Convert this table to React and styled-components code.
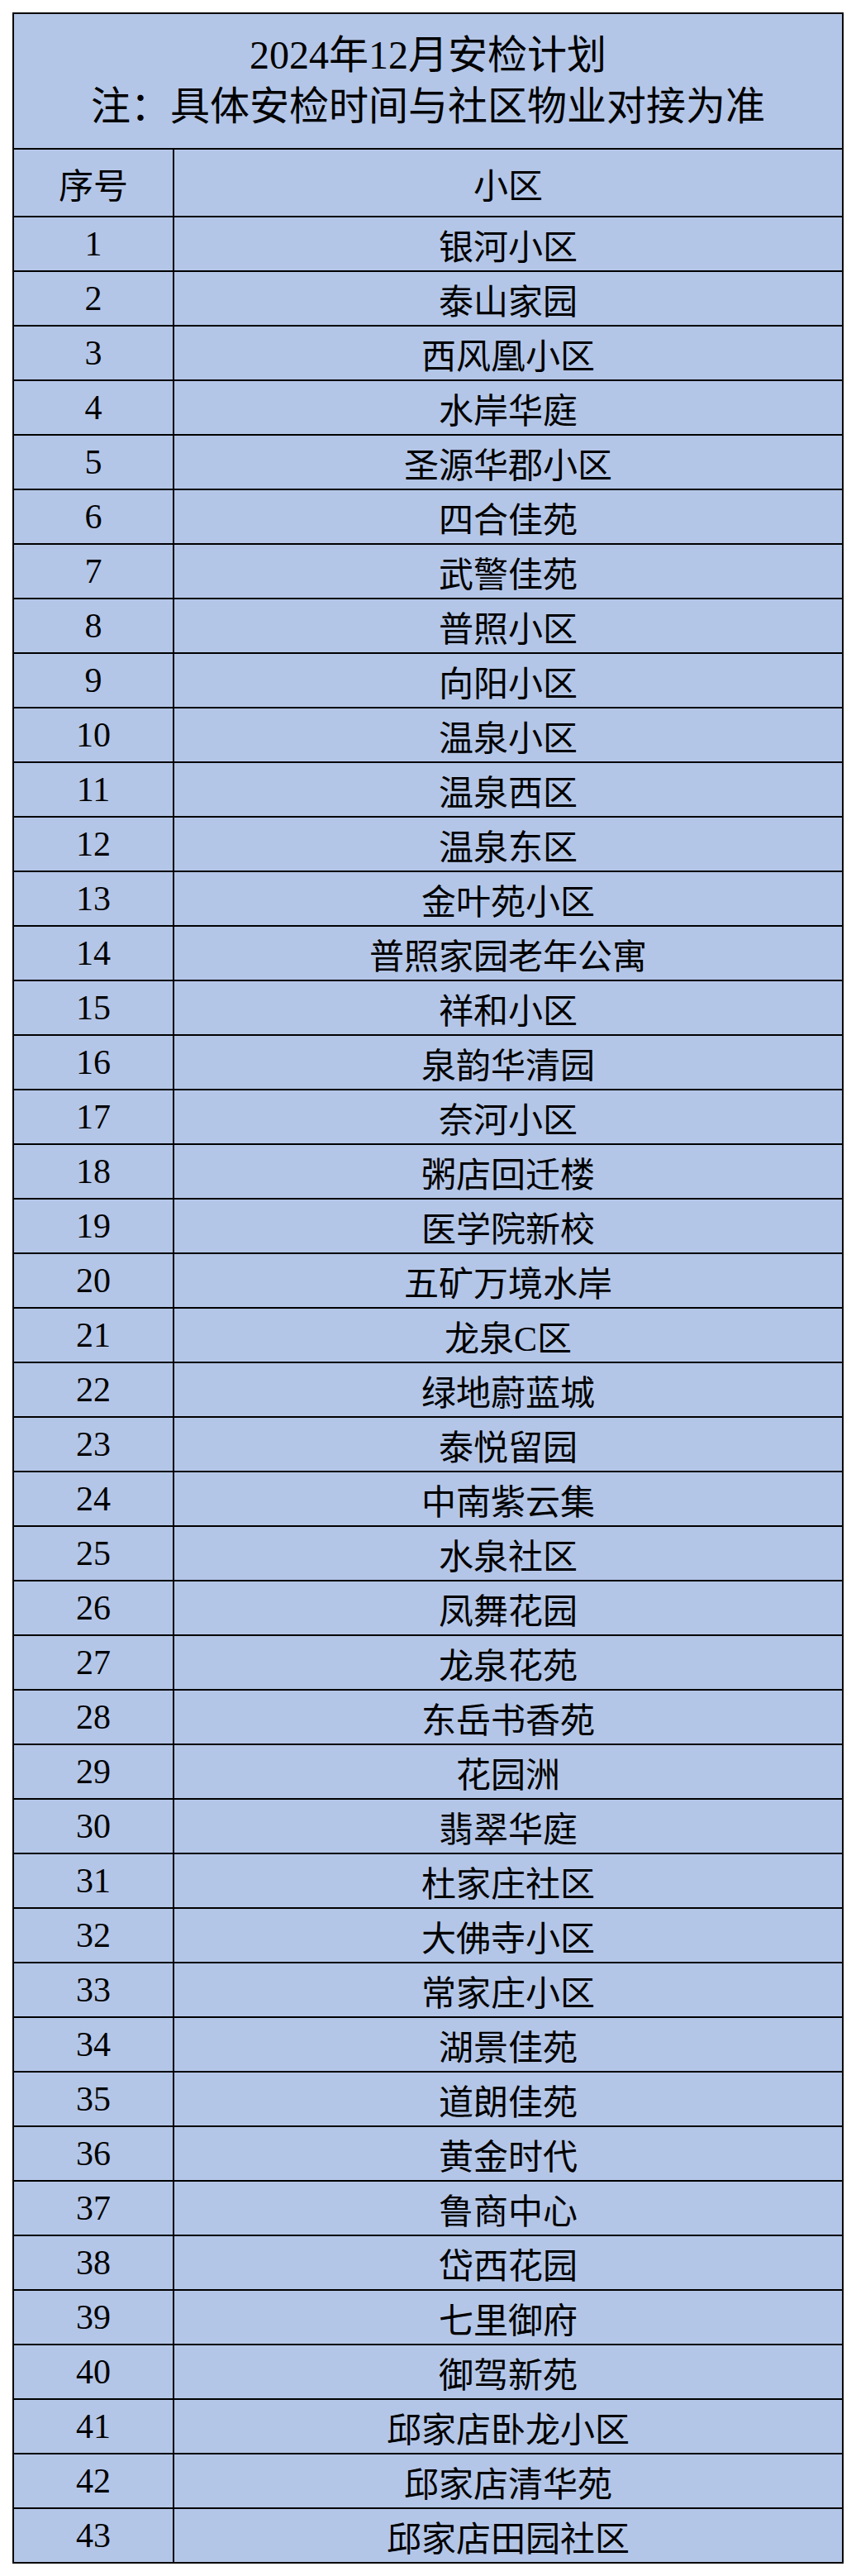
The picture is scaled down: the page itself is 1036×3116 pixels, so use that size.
import styled, { createGlobalStyle } from "styled-components";

const GlobalStyle = createGlobalStyle`
  body {
    margin: 0;
    background: #ffffff;
    font-family: "Liberation Serif", "Noto Sans CJK SC", serif;
    color: #000;
  }
`;

const Page = styled.div`
  padding: 15px 0 15px 15px;
`;

const Sheet = styled.div`
  width: 1002px;
  border: 2px solid #000;
  background: #b4c6e7;
`;

const TitleBlock = styled.div`
  height: 162px;
  display: flex;
  flex-direction: column;
  align-items: center;
  justify-content: center;
  font-size: 48px;
  line-height: 62px;
`;

const Row = styled.div`
  display: flex;
  height: ${(p) => (p.$head ? 80 : 64)}px;
  border-top: 2px solid #000;
`;

const Cell = styled.div`
  display: flex;
  align-items: center;
  justify-content: center;
  font-size: 42px;
  ${(p) =>
    p.$num
      ? `width: 192px; border-right: 2px solid #000;`
      : `flex: 1;`}
`;

const estates = [
  "银河小区", "泰山家园", "西风凰小区", "水岸华庭", "圣源华郡小区", "四合佳苑",
  "武警佳苑", "普照小区", "向阳小区", "温泉小区", "温泉西区", "温泉东区",
  "金叶苑小区", "普照家园老年公寓", "祥和小区", "泉韵华清园", "奈河小区",
  "粥店回迁楼", "医学院新校", "五矿万境水岸", "龙泉C区", "绿地蔚蓝城",
  "泰悦留园", "中南紫云集", "水泉社区", "凤舞花园", "龙泉花苑", "东岳书香苑",
  "花园洲", "翡翠华庭", "杜家庄社区", "大佛寺小区", "常家庄小区", "湖景佳苑",
  "道朗佳苑", "黄金时代", "鲁商中心", "岱西花园", "七里御府", "御驾新苑",
  "邱家店卧龙小区", "邱家店清华苑", "邱家店田园社区",
];

export default function App() {
  return (
    <Page>
      <GlobalStyle />
      <Sheet>
        <TitleBlock>
          <div>2024年12月安检计划</div>
          <div>注：具体安检时间与社区物业对接为准</div>
        </TitleBlock>
        <Row $head>
          <Cell $num>序号</Cell>
          <Cell>小区</Cell>
        </Row>
        {estates.map((name, i) => (
          <Row key={name}>
            <Cell $num>{i + 1}</Cell>
            <Cell>{name}</Cell>
          </Row>
        ))}
      </Sheet>
    </Page>
  );
}
